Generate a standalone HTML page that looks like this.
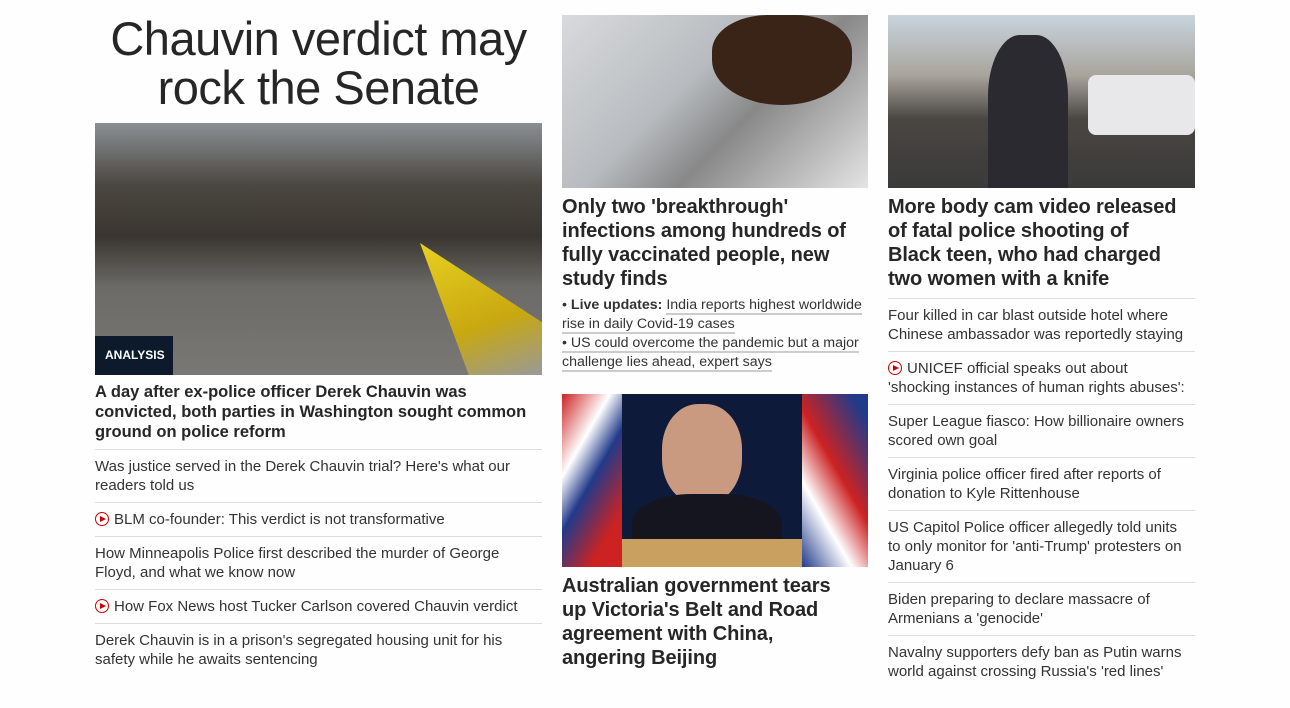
<!DOCTYPE html>
<html><head><meta charset="utf-8"><style>
*{margin:0;padding:0;box-sizing:border-box}
body{width:1290px;height:708px;background:#fefefe;font-family:"Liberation Sans",sans-serif;color:#262626;position:relative;overflow:hidden}
.a{position:absolute}
h1{font-size:47px;font-weight:400;line-height:49px;text-align:center;letter-spacing:-0.5px;white-space:nowrap}
.hb{font-weight:700;font-size:20px;line-height:24px;white-space:nowrap;letter-spacing:-0.1px}
.h1b{font-weight:700;font-size:16.5px;line-height:20px;white-space:nowrap}
ul{list-style:none}
li{font-size:15px;line-height:19px;border-top:1px solid #ddd;padding:7px 0 7px;color:#333;white-space:nowrap}
.p{display:inline-block;width:14px;height:14px;border:1.5px solid #c00;border-radius:50%;position:relative;vertical-align:-2px;margin-right:5px}
.p:after{content:"";position:absolute;left:4px;top:2.5px;border-left:6px solid #c00;border-top:3.5px solid transparent;border-bottom:3.5px solid transparent}
.u{font-size:14.2px;line-height:19px;color:#333;white-space:nowrap}
.u span{border-bottom:2px solid #ccc}
</style></head><body>
<div class="a" style="left:95px;top:14px;width:447px"><h1>Chauvin verdict may<br>rock the Senate</h1></div>
<div class="a" style="left:95px;top:123px;width:447px;height:252px;background:linear-gradient(180deg,#8a8f94 0%,#4a4640 25%,#3a3530 45%,#6b6a66 65%,#7a7874 100%)">
 <div class="a" style="left:325px;top:120px;width:122px;height:132px;background:linear-gradient(160deg,#e8d020,#c8a810 60%,#999 100%);clip-path:polygon(0 0,100% 60%,100% 100%,40% 100%)"></div>
 <div class="a" style="left:0;top:213px;width:78px;height:39px;background:#0c1a2c;color:#fff;font-weight:700;font-size:12px;line-height:39px;padding-left:10px">ANALYSIS</div>
</div>
<div class="a h1b" style="left:95px;top:382px;width:447px">A day after ex-police officer Derek Chauvin was<br>convicted, both parties in Washington sought common<br>ground on police reform</div>
<ul class="a" style="left:95px;top:449px;width:447px">
<li>Was justice served in the Derek Chauvin trial? Here's what our<br>readers told us</li>
<li><span class="p"></span>BLM co-founder: This verdict is not transformative</li>
<li>How Minneapolis Police first described the murder of George<br>Floyd, and what we know now</li>
<li><span class="p"></span>How Fox News host Tucker Carlson covered Chauvin verdict</li>
<li style="padding-bottom:0">Derek Chauvin is in a prison's segregated housing unit for his<br>safety while he awaits sentencing</li>
</ul>
<div class="a" style="left:562px;top:15px;width:306px;height:173px;background:linear-gradient(135deg,#d8dadc 0%,#b8bcc0 40%,#888 60%,#e4e4e4 100%)">
 <div class="a" style="left:150px;top:0;width:140px;height:90px;background:#3a2418;border-radius:40% 40% 50% 50%"></div></div>
<div class="a hb" style="left:562px;top:195px;width:306px">Only two 'breakthrough'<br>infections among hundreds of<br>fully vaccinated people, new<br>study finds</div>
<div class="a u" style="left:562px;top:296px;width:306px">• <b>Live updates:</b> <span>India reports highest worldwide</span><br><span>rise in daily Covid-19 cases</span><br><span>• US could overcome the pandemic but a major</span><br><span>challenge lies ahead, expert says</span></div>
<div class="a" style="left:562px;top:394px;width:306px;height:173px;background:#0e1a3a;overflow:hidden">
 <div class="a" style="left:0;top:0;width:60px;height:173px;background:linear-gradient(120deg,#c22 0%,#fff 30%,#223a8a 50%,#c22 80%)"></div>
 <div class="a" style="left:240px;top:0;width:66px;height:173px;background:linear-gradient(60deg,#223a8a 0%,#fff 30%,#c22 55%,#223a8a 90%)"></div>
 <div class="a" style="left:100px;top:10px;width:80px;height:100px;background:#c99a80;border-radius:45%"></div>
 <div class="a" style="left:70px;top:100px;width:150px;height:73px;background:#151520;border-radius:40% 40% 0 0"></div>
 <div class="a" style="left:60px;top:145px;width:180px;height:28px;background:#c9a060"></div></div>
<div class="a hb" style="left:562px;top:574px;width:306px">Australian government tears<br>up Victoria's Belt and Road<br>agreement with China,<br>angering Beijing</div>
<div class="a" style="left:888px;top:15px;width:307px;height:173px;background:linear-gradient(180deg,#c8d4de 0%,#a8a49c 35%,#4a4642 60%,#3a3a3a 100%)">
 <div class="a" style="left:200px;top:60px;width:107px;height:60px;background:#e8e8ea;border-radius:8px"></div>
 <div class="a" style="left:100px;top:20px;width:80px;height:153px;background:#2a2a30;border-radius:40% 40% 0 0"></div></div>
<div class="a hb" style="left:888px;top:195px;width:307px">More body cam video released<br>of fatal police shooting of<br>Black teen, who had charged<br>two women with a knife</div>
<ul class="a" style="left:888px;top:298px;width:307px">
<li>Four killed in car blast outside hotel where<br>Chinese ambassador was reportedly staying</li>
<li><span class="p"></span>UNICEF official speaks out about<br>'shocking instances of human rights abuses':</li>
<li>Super League fiasco: How billionaire owners<br>scored own goal</li>
<li>Virginia police officer fired after reports of<br>donation to Kyle Rittenhouse</li>
<li>US Capitol Police officer allegedly told units<br>to only monitor for 'anti-Trump' protesters on<br>January 6</li>
<li>Biden preparing to declare massacre of<br>Armenians a 'genocide'</li>
<li>Navalny supporters defy ban as Putin warns<br>world against crossing Russia's 'red lines'</li>
</ul>
</body></html>
